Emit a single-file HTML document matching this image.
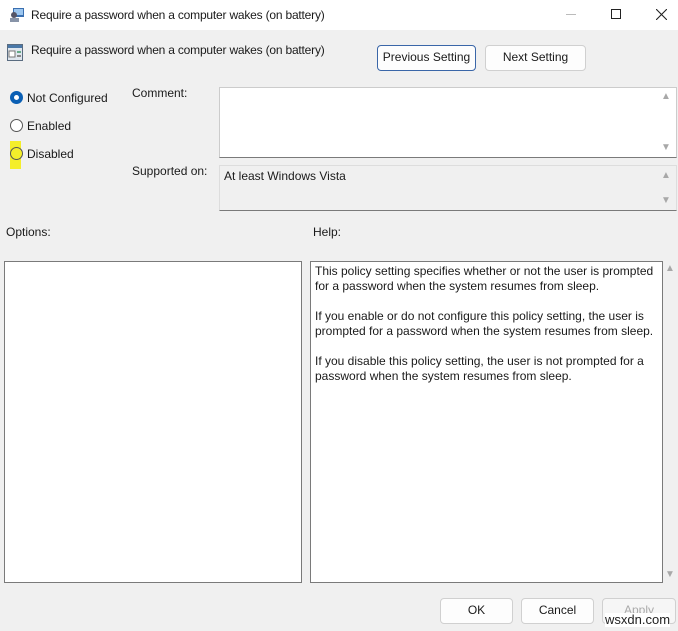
<!DOCTYPE html>
<html><head><style>
*{margin:0;padding:0;box-sizing:border-box}
body{width:678px;height:631px;background:#f0f0f0;font-family:"Liberation Sans",sans-serif;font-size:12px;color:#1a1a1a;position:relative;overflow:hidden}
.a{position:absolute}
.btn{position:absolute;background:#fdfdfd;border:1px solid #d0d0d0;border-radius:4px;text-align:center;font-size:12px;line-height:23px}
.box{position:absolute;border:1px solid #7a7a7a;background:#fff}
.r{position:absolute;width:13px;height:13px;border-radius:50%;border:1px solid #555;background:#fff}
.tri{position:absolute;color:#a8a8a8;font-size:10px}
</style></head><body>
<div class="a" style="left:0;top:0;width:678px;height:30px;background:#fff"></div>
<svg class="a" style="left:9px;top:7px" width="16" height="16"><rect x="4" y="1" width="11" height="9" fill="#3a6fb0"/><rect x="5" y="2" width="9" height="6" fill="#9cc6ef"/><circle cx="5" cy="8" r="3" fill="#556"/><rect x="1" y="11" width="9" height="4" fill="#8894a8"/></svg>
<div class="a" style="left:31px;top:8px;font-size:12px;letter-spacing:-0.2px">Require a password when a computer wakes (on battery)</div>
<div class="a" style="left:566px;top:14px;width:10px;height:1px;background:#bbb"></div>
<div class="a" style="left:611px;top:9px;width:10px;height:10px;border:1px solid #222"></div>
<svg class="a" style="left:656px;top:9px" width="11" height="11"><path d="M0 0L11 11M11 0L0 11" stroke="#222" stroke-width="1.1"/></svg>
<svg class="a" style="left:7px;top:44px" width="16" height="17"><rect x="0.5" y="0.5" width="15" height="16" fill="#dfe6ee" stroke="#5a6c80"/><rect x="1" y="1" width="14" height="3" fill="#4a78a8"/><rect x="2" y="7" width="6" height="6" fill="#fff" stroke="#777"/><rect x="10" y="7" width="4" height="2" fill="#6a8"/><rect x="10" y="11" width="4" height="2" fill="#888"/></svg>
<div class="a" style="left:31px;top:43px;font-size:12px;letter-spacing:-0.2px">Require a password when a computer wakes (on battery)</div>
<div class="btn" style="left:377px;top:45px;width:99px;height:26px;border:1px solid #3a66a8">Previous Setting</div>
<div class="btn" style="left:485px;top:45px;width:101px;height:26px">Next Setting</div>
<div class="r" style="left:10px;top:91px;border:4px solid #0a5fb4"></div>
<div class="a" style="left:27px;top:91px">Not Configured</div>
<div class="r" style="left:10px;top:119px"></div>
<div class="a" style="left:27px;top:119px">Enabled</div>
<div class="a" style="left:10px;top:141px;width:11px;height:28px;background:#f4ee2a"></div>
<div class="r" style="left:10px;top:147px;background:#f4ee2a"></div>
<div class="a" style="left:27px;top:147px">Disabled</div>
<div class="a" style="left:132px;top:86px">Comment:</div>
<div class="a" style="left:132px;top:164px">Supported on:</div>
<div class="box" style="left:219px;top:87px;width:458px;height:71px;border-color:#ccc;border-bottom:1px solid #7a7a7a"></div>
<div class="tri" style="left:661px;top:91px">▲</div><div class="tri" style="left:661px;top:142px">▼</div>
<div class="box" style="left:219px;top:165px;width:458px;height:46px;background:#f0f0f0;border-color:#ddd;border-bottom:1px solid #7a7a7a"></div>
<div class="a" style="left:224px;top:169px">At least Windows Vista</div>
<div class="tri" style="left:661px;top:170px">▲</div><div class="tri" style="left:661px;top:195px">▼</div>
<div class="a" style="left:6px;top:225px">Options:</div>
<div class="a" style="left:313px;top:225px">Help:</div>
<div class="box" style="left:4px;top:261px;width:298px;height:322px"></div>
<div class="box" style="left:310px;top:261px;width:353px;height:322px;padding:2px 4px;line-height:15px">
<div>This policy setting specifies whether or not the user is prompted for a password when the system resumes from sleep.</div><br>
<div>If you enable or do not configure this policy setting, the user is prompted for a password when the system resumes from sleep.</div><br>
<div>If you disable this policy setting, the user is not prompted for a password when the system resumes from sleep.</div></div>
<div class="tri" style="left:665px;top:263px">▲</div><div class="tri" style="left:665px;top:569px">▼</div>
<div class="btn" style="left:440px;top:598px;width:73px;height:26px">OK</div>
<div class="btn" style="left:521px;top:598px;width:73px;height:26px">Cancel</div>
<div class="btn" style="left:602px;top:598px;width:74px;height:26px;color:#aaa;background:#f6f6f6">Apply</div>
<div class="a" style="left:605px;top:613px;font-size:13px;color:#222;background:#fff;line-height:14px">wsxdn.com</div>
</body></html>
